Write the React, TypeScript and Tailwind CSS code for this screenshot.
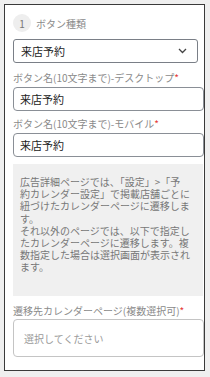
import React from "react";

const jp = { fontFamily: '"Noto Sans CJK JP", "Noto Sans", sans-serif' };

const notice = [
  "広告詳細ページでは、「設定」>「予",
  "約カレンダー設定」で掲載店舗ごとに",
  "紐づけたカレンダーページに遷移しま",
  "す。",
  "それ以外のページでは、以下で指定し",
  "たカレンダーページに遷移します。複",
  "数指定した場合は選択画面が表示され",
  "ます。",
];

function Label({ text }: { text: string }) {
  return (
    <div className="text-[10px] leading-[14px] text-[#8a8a8a]">
      {text}
      <span className="text-[#e53935]">*</span>
    </div>
  );
}

export default function App() {
  return (
    <div className="w-[210px] h-[377px] bg-[#efefef] pt-[4px] pl-[4px]" style={jp}>
      <div className="w-[201px] h-[367px] bg-white border border-[#3a3a3a] pl-[8px] pt-[8px] flex flex-col">
        {/* step header */}
        <div className="flex items-center gap-[5px] h-[18px] mt-[1px]">
          <div className="w-[18px] h-[18px] rounded-full bg-[#eeeeee] flex items-center justify-center text-[10px] text-[#777]">
            1
          </div>
          <span className="text-[10px] text-[#8a8a8a]">ボタン種類</span>
        </div>

        {/* select */}
        <div className="mt-[7px] w-[185px] h-[24px] border border-[#7a7f87] rounded-[3px] flex items-center justify-between pl-[7px] pr-[10px]">
          <span className="text-[11px] text-[#222]">来店予約</span>
          <svg width="9" height="6" viewBox="0 0 9 6" fill="none">
            <path d="M1 1l3.5 3.5L8 1" stroke="#444" strokeWidth="1.3" />
          </svg>
        </div>

        <div className="mt-[8px]">
          <Label text="ボタン名(10文字まで)-デスクトップ" />
        </div>
        <div className="mt-[2px] w-[191px] h-[24px] border border-[#8a8f96] rounded-[4px] flex items-center pl-[6px]">
          <span className="text-[11px] text-[#222]">来店予約</span>
        </div>

        <div className="mt-[6px]">
          <Label text="ボタン名(10文字まで)-モバイル" />
        </div>
        <div className="mt-[2px] w-[191px] h-[24px] border border-[#8a8f96] rounded-[4px] flex items-center pl-[6px]">
          <span className="text-[11px] text-[#222]">来店予約</span>
        </div>

        {/* info box */}
        <div className="mt-[7px] w-[190px] h-[132px] bg-[#f0f0f0] pl-[7px] pr-[4px] pt-[12px]">
          {notice.map((line, i) => (
            <div key={i} className="text-[10px] leading-[12.2px] text-[#777] whitespace-nowrap">
              {line}
            </div>
          ))}
        </div>

        <div className="mt-[8px]">
          <Label text="遷移先カレンダーページ(複数選択可)" />
        </div>
        <div className="mt-[1px] w-[191px] h-[38px] border border-[#c4c4c4] rounded-[4px] flex items-center pl-[10px]">
          <span className="text-[10px] text-[#9a9a9a]">選択してください</span>
        </div>
      </div>
    </div>
  );
}
